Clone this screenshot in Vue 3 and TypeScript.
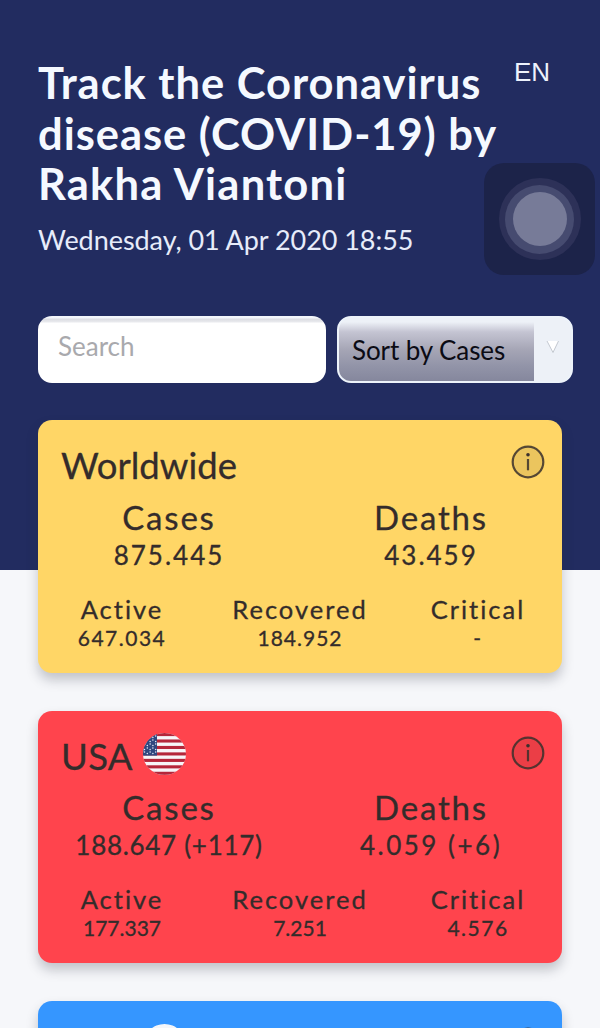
<script setup lang="ts">
interface Stat {
  label: string
  value: string
  fit?: string
}

interface CountryCard {
  name: string
  tone: 'yellow' | 'red' | 'blue'
  flag?: 'us' | 'plain'
  main: Stat[]
  detail: Stat[]
}

const cards: CountryCard[] = [
  {
    name: 'Worldwide',
    tone: 'yellow',
    main: [
      { label: 'Cases', value: '875.445' },
      { label: 'Deaths', value: '43.459' },
    ],
    detail: [
      { label: 'Active', value: '647.034' },
      { label: 'Recovered', value: '184.952', fit: 'snug' },
      { label: 'Critical', value: '-' },
    ],
  },
  {
    name: 'USA',
    tone: 'red',
    flag: 'us',
    main: [
      { label: 'Cases', value: '188.647 (+117)', fit: 'narrow' },
      { label: 'Deaths', value: '4.059 (+6)', fit: 'wide' },
    ],
    detail: [
      { label: 'Active', value: '177.337', fit: 'tight' },
      { label: 'Recovered', value: '7.251', fit: 'tight' },
      { label: 'Critical', value: '4.576' },
    ],
  },
  { name: '', tone: 'blue', flag: 'plain', main: [], detail: [] },
]

const titleLines = ['Track the Coronavirus', 'disease (COVID-19) by', 'Rakha Viantoni']
const stars = Array.from({ length: 25 }, (_, i) => ({
  x: 1.5 + (i % 5) * 2.8,
  y: 3 + Math.floor(i / 5) * 4 + (i % 2) * 1.5,
}))
</script>

<template>
  <div class="page">
    <header class="hero">
      <div class="hero-text">
        <h1 class="title">
          <span v-for="(line, i) in titleLines" :key="line" class="title-line" :class="'line-' + (i + 1)">{{ line }}</span>
        </h1>
        <p class="date">Wednesday, 01 Apr 2020 18:55</p>
      </div>
      <span class="lang">EN</span>
    </header>

    <div class="controls">
      <div class="search">Search</div>
      <div class="sort">
        <div class="sort-label">Sort by Cases</div>
        <div class="sort-arrow">
          <svg width="14" height="14" viewBox="0 0 14 14">
            <path d="M1 1H12.5L7 12Z" fill="#fff" />
            <path d="M1 1L7 12.5L12.5 1" fill="none" stroke="#c3c8d0" stroke-width="1" />
          </svg>
        </div>
      </div>
    </div>

    <main class="cards">
      <article v-for="card in cards" :key="card.tone" class="card" :class="card.tone">
        <div class="card-head">
          <h2 v-if="card.name" class="name">{{ card.name }}</h2>
          <span v-else class="name-space"></span>
          <svg v-if="card.flag === 'us'" class="flag" viewBox="0 0 43 42">
            <defs><clipPath id="disc"><ellipse cx="21.5" cy="21" rx="21.5" ry="21" /></clipPath></defs>
            <g clip-path="url(#disc)">
              <rect width="43" height="42" fill="#f7f5f8" />
              <rect v-for="n in 7" :key="n" x="0" :y="(n - 1) * 6.46" width="43" height="3.1" fill="#b5263a" />
              <rect width="14" height="22.6" fill="#30477f" />
              <circle v-for="(s, i) in stars" :key="'s' + i" :cx="s.x" :cy="s.y" r="0.75" fill="#e5e8f4" />
            </g>
          </svg>
          <svg v-else class="flag" :class="{ hidden: !card.flag }" viewBox="0 0 43 42">
            <circle cx="21.5" cy="21" r="21" fill="#f4f6fa" />
          </svg>
          <svg class="info" viewBox="0 0 34 34">
            <circle cx="17" cy="17" r="15.3" fill="#000" fill-opacity="0.08" stroke="#3a302c" stroke-opacity="0.85" stroke-width="2.2" />
            <circle cx="17" cy="9.7" r="1.8" fill="#3a302c" />
            <path d="M17 14V25.3" stroke="#3a302c" stroke-opacity="0.85" stroke-width="2.2" />
          </svg>
        </div>
        <div class="main-stats">
          <div v-for="s in card.main" :key="s.label" class="stat">
            <div class="main-label">{{ s.label }}</div>
            <div class="main-value" :class="s.fit">{{ s.value }}</div>
          </div>
        </div>
        <div class="detail-stats">
          <div v-for="s in card.detail" :key="s.label" class="stat">
            <div class="detail-label">{{ s.label }}</div>
            <div class="detail-value" :class="s.fit">{{ s.value }}</div>
          </div>
        </div>
      </article>
    </main>

    <div class="assist">
      <div class="ring outer"><div class="ring inner"><div class="knob"></div></div></div>
    </div>
  </div>
</template>

<style>
body {
  margin: 0;
  overflow: hidden;
}
</style>

<style scoped>
.page {
  position: relative;
  box-sizing: border-box;
  width: 600px;
  height: 1028px;
  overflow: hidden;
  padding: 57px 38px 0;
  background: linear-gradient(#222c60 0 570px, #f6f7fa 570px);
  font-family: Lato, "Liberation Sans", sans-serif;
  color: #342c2b;
}
.hero {
  display: flex;
  justify-content: space-between;
  height: 259px;
}
.title {
  margin: 0;
  font-size: 43.5px;
  line-height: 50.7px;
  font-weight: 700;
  letter-spacing: 0.97px;
  color: #f5f9ff;
}
.title-line {
  display: block;
  white-space: nowrap;
}
.line-3 {
  letter-spacing: 1.2px;
}
.date {
  margin: 11px 0 0;
  font-size: 27px;
  line-height: 40px;
  letter-spacing: -0.05px;
  color: #e7ecfa;
  white-space: nowrap;
}
.hero-text {
  width: 470px;
}
.lang {
  margin-right: 12px;
  font: 26px/30px "Liberation Sans", sans-serif;
  color: #edf2fc;
}
.controls {
  display: flex;
  gap: 11px;
  width: 535px;
  height: 67px;
}
.search {
  box-sizing: border-box;
  width: 288px;
  padding-left: 20px;
  border-radius: 14px;
  background: linear-gradient(#f3f6fb 0 2px, #dcdde2 3px, #e9eaee 6px, #fff 7px);
  font-size: 26px;
  line-height: 60px;
  color: #a9a9ad;
}
.sort {
  box-sizing: border-box;
  display: flex;
  width: 236px;
  border: 2px solid #edf3fa;
  border-radius: 14px;
  background: #edf1f7;
  overflow: hidden;
}
.sort-label {
  box-sizing: border-box;
  width: 195px;
  padding-left: 13px;
  background: linear-gradient(#edf1f7 0 4px, #c4c4d2 14px, #a5a5b5 32px, #9294a8 48px, #85879d);
  font-size: 26px;
  line-height: 64px;
  letter-spacing: -0.1px;
  color: #0b0b14;
  white-space: nowrap;
}
.sort-arrow {
  display: flex;
  justify-content: center;
  width: 37px;
  padding-top: 22px;
}
.cards {
  display: flex;
  flex-direction: column;
  gap: 38px;
  margin-top: 37px;
}
.card {
  box-sizing: border-box;
  flex: none;
  height: 253px;
  border-radius: 14px;
  box-shadow: 0 7px 12px rgba(40, 44, 60, 0.25);
}
.yellow {
  background: #ffd666;
}
.red {
  height: 252px;
  background: #ff444d;
}
.blue {
  background: #3596ff;
}
.card-head {
  box-sizing: border-box;
  display: flex;
  align-items: flex-start;
  height: 76px;
  padding: 22px 17px 0 23px;
}
.red .card-head {
  height: 75px;
}
.blue .card-head {
  padding-top: 23px;
}
.name {
  margin: 0;
  font-size: 36.5px;
  line-height: 46px;
  font-weight: 400;
}
.red .name {
  letter-spacing: 0.3px;
}
.name-space {
  width: 71px;
}
.flag {
  width: 43px;
  height: 42px;
  margin-left: 10.5px;
}
.hidden {
  display: none;
}
.info {
  width: 34px;
  height: 34px;
  margin: 2.5px 0 0 auto;
}
.name,
.stat {
  -webkit-text-stroke: 0.3px #342c2b;
}
.main-stats {
  display: grid;
  grid-template-columns: 1fr 1fr;
}
.detail-stats {
  display: grid;
  grid-template-columns: repeat(3, 1fr);
  gap: 10px;
  margin-top: 21px;
}
.stat {
  text-align: center;
  white-space: nowrap;
}
.main-label {
  font-size: 33px;
  line-height: 42px;
  letter-spacing: 1.8px;
}
.main-value {
  font-size: 26px;
  line-height: 35px;
  letter-spacing: 2px;
}
.main-value.narrow {
  letter-spacing: 0.7px;
}
.main-value.wide {
  letter-spacing: 2.5px;
}
.detail-label {
  font-size: 25.5px;
  line-height: 31px;
  letter-spacing: 2px;
}
.detail-value {
  font-size: 21px;
  line-height: 25px;
  letter-spacing: 1.5px;
}
.detail-value.snug {
  letter-spacing: 1px;
}
.detail-value.tight {
  letter-spacing: 0;
}
.assist {
  position: absolute;
  left: 484px;
  top: 163px;
  display: grid;
  place-items: center;
  width: 111px;
  height: 112px;
  border-radius: 20px;
  background: #1c2349;
}
.ring {
  display: grid;
  place-items: center;
  border-radius: 50%;
}
.outer {
  width: 82px;
  height: 82px;
  background: #2d3158;
}
.inner {
  width: 69px;
  height: 69px;
  background: #464b70;
}
.knob {
  width: 54px;
  height: 54px;
  border-radius: 50%;
  background: #777b98;
}
</style>
